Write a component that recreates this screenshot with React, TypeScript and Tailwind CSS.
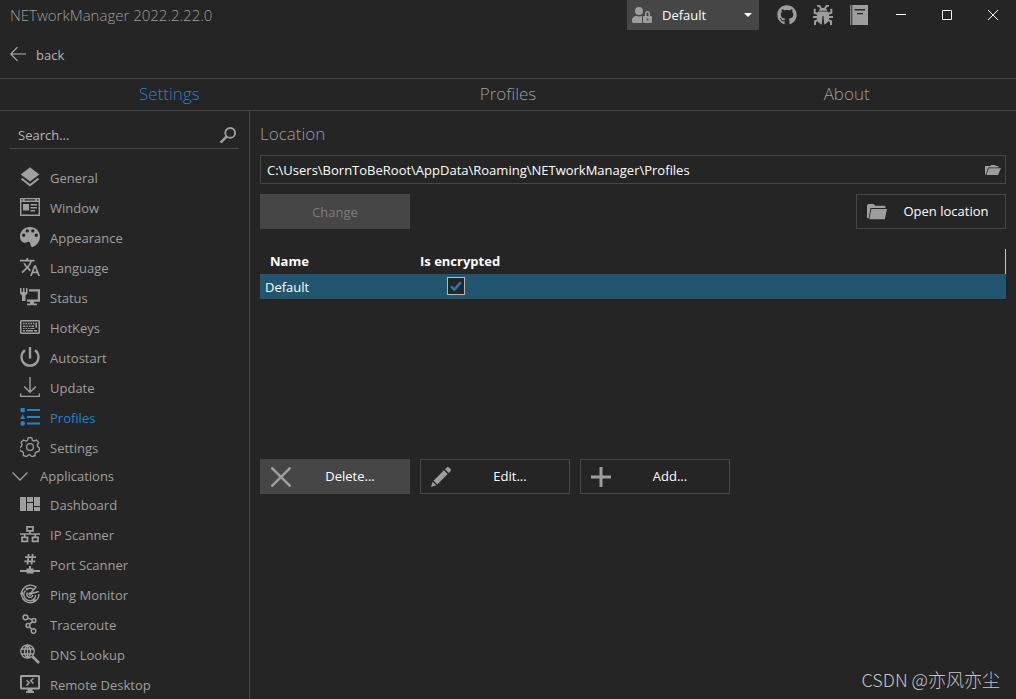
import { useState } from 'react';
import type { ReactNode } from 'react';
import { FaGithub, FaUserLock } from 'react-icons/fa';
import { MdTranslate } from 'react-icons/md';

type NavItem = {
  label: string;
  icon: ReactNode;
};

function Icon({ children, className = 'size-5' }: { children: ReactNode; className?: string }) {
  return (
    <svg viewBox="0 0 20 20" fill="currentColor" className={`${className} shrink-0`} aria-hidden="true">
      {children}
    </svg>
  );
}

const SETTINGS: NavItem[] = [
  {
    label: 'General',
    icon: (
      <Icon>
        <path d="M10 0.3 19.3 7.4 10 14.6 0.7 7.4z" />
        <path d="M0.7 12.2 2.4 10.9 10 16.9 17.6 10.9 19.3 12.2 10 19.6z" />
      </Icon>
    ),
  },
  {
    label: 'Window',
    icon: (
      <Icon>
        <path fillRule="evenodd" d="M0 1h20v18H0zM1.4 5v12.6h17.2V5zM1.5 2.2v1.3H3V2.2zm3 0v1.3h11V2.2zm12.5 0v1.3h1.5V2.2z" />
        <path d="M3 7h6v6.500H3zM10.500 7H17v1.500h-6.500zM10.500 10H17v1.500h-6.500zM10.500 13H15v1.500h-4.500z" />
      </Icon>
    ),
  },
  {
    label: 'Appearance',
    icon: (
      <Icon>
        <path
          fillRule="evenodd"
          d="M10 0C4.200 0 0 4.200 0 9.400c0 4 2.500 6.500 5.200 6.300 1.700-.1 2.600-1.200 4-.7 1.600.6 1 2.600 1.700 4.200.3.700.9.900 1.800.7C17 18.800 20 14.500 20 9.600 20 4.200 15.600 0 10 0zM7.300 2.200a1.700 1.700 0 1 1 0 3.400 1.700 1.700 0 0 1 0-3.400zm5.500 0a1.700 1.700 0 1 1 0 3.400 1.700 1.700 0 0 1 0-3.400zM3.700 6.600a1.700 1.700 0 1 1 0 3.400 1.700 1.700 0 0 1 0-3.400zm12.600 0a1.700 1.700 0 1 1 0 3.400 1.700 1.700 0 0 1 0-3.400z"
        />
      </Icon>
    ),
  },
  {
    label: 'Language',
    icon: <MdTranslate className="size-5 shrink-0" viewBox="1 2 22 20" />,
  },
  {
    label: 'Status',
    icon: (
      <Icon>
        <path d="M0 1h1.500v4H3V1h1.500v4H6V1h1.500v5.500L5.500 8.500V14H2V8.500L0 6.500z" />
        <path d="M9 2.200h11v12.500h-6V16.500h3V18.200H7v-1.700h3v-1.800H7v-2.200h10.800V4.400H9z" />
      </Icon>
    ),
  },
  {
    label: 'HotKeys',
    icon: (
      <Icon>
        <path fillRule="evenodd" d="M1 3h18l1 1v12l-1 1H1l-1-1V4zM1.500 4.500v11h17v-11z" />
        <path d="M3 5.700h1.500v1.500H3zm2.500 0H7v1.500H5.500zm2.500 0h1.500v1.500H8zm2.500 0H12v1.500h-1.500zm2.500 0h1.500v1.500H13zm2.500 0H17v5h-1.500zM3 8.500h2.500V10H3zm3.500 0H8V10H6.500zm2.500 0h1.500V10H9zm2.500 0H14V10h-2.500zM3 11h1.500v1H3zm2.500 0H7v1H5.500zM8 11h1.500v1H8zm2.500 0h4v1h-4zM3 13h2v1.500H3zm3 0h7v1.500H6zm8 0h3v1.500h-3z" />
      </Icon>
    ),
  },
  {
    label: 'Autostart',
    icon: (
      <Icon>
        <path d="M5 3.300A8.500 8.500 0 1 0 15 3.300" fill="none" stroke="currentColor" strokeWidth="2.300" />
        <path d="M8.800 0h2.400v11.500H8.800z" />
      </Icon>
    ),
  },
  {
    label: 'Update',
    icon: (
      <Icon>
        <path d="M10 0v15M4.200 9.500 10 15.300l5.800-5.800M.6 16.500v2.900h18.800v-2.900" fill="none" stroke="currentColor" strokeWidth="1.400" />
      </Icon>
    ),
  },
  {
    label: 'Profiles',
    icon: (
      <Icon>
        <path d="M.6 1h4.200v4.200H.6zM2.700 7.200 5.200 12H.2zM7 2h13v2H7zM7 9h13v2H7zM7 15.500h13v2H7z" />
        <circle cx="2.700" cy="16.400" r="2.300" />
      </Icon>
    ),
  },
  {
    label: 'Settings',
    icon: (
      <Icon>
        <path
          d="M8.200.7h3.600l.5 2.500 1.700.9 2.400-1.100 2.300 2.700-1.300 2.200.4 1.900 1.900 1.500-.9 3.200-2.500.4-1.300 1.300.1 2.500-3.300 1-1.800-1.800h-1.800l-1.700 1.800-3.200-1.300.2-2.500-1.200-1.400-2.300-.6-.5-3.200 2-1.400.5-1.800L1.100 5.400 3.500 3l2.400 1.100 1.700-.9z"
          fill="none"
          stroke="currentColor"
          strokeWidth="1.300"
          strokeLinejoin="round"
        />
        <circle cx="10" cy="10" r="3.400" fill="none" stroke="currentColor" strokeWidth="1.300" />
      </Icon>
    ),
  },
];

const APPLICATIONS: NavItem[] = [
  {
    label: 'Dashboard',
    icon: (
      <Icon>
        <path d="M0 3h6v14H0zM7 3h6v5H7zM7 9h6v8H7zM14 3h6v9h-6zM14 13h6v4h-6z" />
      </Icon>
    ),
  },
  {
    label: 'IP Scanner',
    icon: (
      <Icon>
        <path
          d="M7 2.800h6v4H7zM2 13.300h5.500v4H2zM12.500 13.300H18v4h-5.500zM10 7v3M0 10h20M4.700 10v3M15.300 10v3"
          fill="none"
          stroke="currentColor"
          strokeWidth="1.700"
        />
      </Icon>
    ),
  },
  {
    label: 'Port Scanner',
    icon: (
      <Icon>
        <path d="M8.700 0 7.500 10.500M12.700 0 11.500 10.500M5 3.200h11M4.300 7.300h11" fill="none" stroke="currentColor" strokeWidth="1.800" />
        <path d="M9 12h2v2.500h2.500V16H20v2h-6.500v1.500h-7V18H0v-2h6.500v-1.500H9z" />
      </Icon>
    ),
  },
  {
    label: 'Ping Monitor',
    icon: (
      <Icon>
        <path
          d="M3.500 4.500A8.700 8.700 0 1 0 19 10M3.500 4.500A9 9 0 0 1 15.700 2.800M5.500 6.500A6 6 0 1 0 15.800 11M7 5A6 6 0 0 1 13.300 5.300M7.500 8.500A3 3 0 1 0 12.800 11M10 10 16.500 2.500M10 10 18.800 7.500"
          fill="none"
          stroke="currentColor"
          strokeWidth="1.400"
        />
        <circle cx="1.800" cy="9.500" r="1.600" />
        <circle cx="10" cy="10" r="1.700" />
        <circle cx="14.500" cy="16.500" r="1.600" />
        <circle cx="7" cy="5" r="1.300" />
      </Icon>
    ),
  },
  {
    label: 'Traceroute',
    icon: (
      <Icon>
        <g fill="none" stroke="currentColor" strokeWidth="1.500">
          <circle cx="5.500" cy="3.300" r="2.400" />
          <circle cx="14" cy="6.500" r="1.900" />
          <circle cx="8" cy="11.500" r="1.900" />
          <circle cx="13.500" cy="17" r="2.300" />
          <path d="m7.800 4.100 4.300 1.600M12.500 7.700l-3 2.500M9.300 12.900l2.500 2.400" />
        </g>
      </Icon>
    ),
  },
  {
    label: 'DNS Lookup',
    icon: (
      <Icon>
        <path
          d="M7.500.8a6.700 6.700 0 1 0 0 13.400 6.700 6.700 0 0 0 0-13.400zm0 0c-4 3.500-4 9.900 0 13.400 4-3.500 4-9.900 0-13.400zv13.400M1.500 5h12M1.500 10h12"
          fill="none"
          stroke="currentColor"
          strokeWidth="1.300"
        />
        <path d="m12.500 12.500 6.500 6.500" stroke="currentColor" strokeWidth="2.600" />
      </Icon>
    ),
  },
  {
    label: 'Remote Desktop',
    icon: (
      <Icon>
        <path fillRule="evenodd" d="M1 1h18l1 1v12.500l-1 1h-6.500V17.300H14V19H6v-1.700h1.500v-1.800H1l-1-1V2zm.9 1.900v10.700h16.200V2.900z" />
        <path d="m6.500 6.300 2.700 2.500-2.700 2.800M13.500 4.200l-2.700 2.600 2.700 2.800" fill="none" stroke="currentColor" strokeWidth="1.500" />
      </Icon>
    ),
  },
];

const TABS = ['Settings', 'Profiles', 'About'];

const FolderIcon = ({ className }: { className?: string }) => (
  <Icon className={className}>
    <path d="M0 3.200 1.200 2h5.500l1.500 1.700h9.300l1 1V6H3.500L1.700 16.200l-.9.300L0 15.700z" />
    <path d="M4.300 7H20L17.800 17.200H2.300z" />
  </Icon>
);

function NavLink({ item, active, onSelect }: { item: NavItem; active: boolean; onSelect: () => void }) {
  return (
    <li>
      <button
        onClick={onSelect}
        className={`flex h-[30px] w-full items-start gap-2.5 pl-5 text-left leading-[30px] ${active ? 'text-[#2283ca]' : 'text-[#9f9f9f]'}`}
      >
        <span className="pt-1">{item.icon}</span>
        {item.label}
      </button>
    </li>
  );
}

function ActionButton({ icon, label, filled = false }: { icon: ReactNode; label: string; filled?: boolean }) {
  return (
    <button
      className={`flex h-[35px] w-[150px] items-center border border-[#464646] pl-2.5 text-white ${filled ? 'bg-[#464646]' : ''}`}
    >
      <span className="text-[#9d9d9d]">{icon}</span>
      <span className="flex-1 text-center">{label}</span>
    </button>
  );
}

function TitleBar() {
  return (
    <header className="flex h-[30px] items-center text-[#9d9d9d]">
      <h1 className="flex-1 pl-2.5 text-[15px] font-light">NETworkManager 2022.2.22.0</h1>
      <div className="relative mr-[18px] h-full w-[132px] bg-[#464646]">
        <FaUserLock className="pointer-events-none absolute top-[5px] left-[5px] size-5" />
        <select aria-label="Profile" className="h-full w-full appearance-none bg-transparent pt-0.5 pl-[35px] text-white">
          <option>Default</option>
        </select>
        <svg viewBox="0 0 8 4" className="pointer-events-none absolute top-[13px] right-[7px] h-1 w-2 fill-white">
          <path d="M0 0h8L4 4z" />
        </svg>
      </div>
      <div className="flex items-center gap-4 pr-[9px]">
        <a href="#github" aria-label="GitHub">
          <FaGithub className="size-5" />
        </a>
        <a href="#issues" aria-label="Report a bug">
          <Icon>
            <path d="M7 3.600 5.800 1.700H4V0h3l1.900 3h2.200L13 0h3v1.700h-1.800L13 3.600l1.300 2.200H5.700z" />
            <path d="M5.200 6.500h9.600c1 1.700 1.500 3.700 1.400 6.200-.2 3.200-1.900 5.700-5 6.900l-.7-8.600h-1l-.7 8.600c-3.100-1.200-4.800-3.700-5-6.900-.1-2.500.4-4.500 1.400-6.200z" />
            <path
              d="M5 9 1.700 7.700V3.800M4.400 12H0M5 15l-3 1.300V20M15 9l3.300-1.300V3.800M15.600 12H20M15 15l3 1.300V20"
              fill="none"
              stroke="currentColor"
              strokeWidth="2"
            />
          </Icon>
        </a>
        <a href="#docs" aria-label="Documentation">
          <Icon>
            <path d="M1 0h1.500v20H1z" opacity="0.7" />
            <path fillRule="evenodd" d="M3.300 0H19v20H3.300zM5.500 4v1.500h10.500V4zM8 8v1.200h6V8z" />
          </Icon>
        </a>
      </div>
      <div className="flex h-full text-white">
        <button aria-label="Minimize" className="grid w-[46px] place-items-center">
          <svg viewBox="0 0 10 10" className="size-2.5" fill="none" stroke="currentColor">
            <path d="M0 4.500h10" />
          </svg>
        </button>
        <button aria-label="Maximize" className="grid w-[46px] place-items-center">
          <svg viewBox="0 0 10 10" className="size-2.5" fill="none" stroke="currentColor">
            <path d="M.5.5h9v9h-9z" />
          </svg>
        </button>
        <button aria-label="Close" className="grid w-[46px] place-items-center">
          <svg viewBox="0 0 10 10" className="size-2.5" fill="none" stroke="currentColor">
            <path d="m0 0 10 10M10 0 0 10" />
          </svg>
        </button>
      </div>
    </header>
  );
}

function Sidebar({ view, onView }: { view: string; onView: (v: string) => void }) {
  const [appsOpen, setAppsOpen] = useState(true);

  return (
    <aside className="w-[250px] shrink-0 overflow-hidden border-r border-[#464646]">
      <label className="mx-2.5 mt-3 mb-3.5 flex h-[26px] items-center border-b border-[#464646] pl-2 text-[#9d9d9d]">
        <input
          type="text"
          aria-label="Search"
          placeholder="Search..."
          className="min-w-0 flex-1 bg-transparent outline-none placeholder:text-[#b4b4b4]"
        />
        <svg viewBox="0 0 18 18" className="mr-0.5 size-[18px]" fill="none" stroke="currentColor">
          <circle cx="11.200" cy="5.900" r="4.900" strokeWidth="1.900" />
          <path d="m7.500 9.700-5.900 5.900" strokeWidth="2.600" />
        </svg>
      </label>
      <ul>
        {SETTINGS.map((item) => (
          <NavLink key={item.label} item={item} active={item.label === view} onSelect={() => onView(item.label)} />
        ))}
      </ul>
      <button
        onClick={() => setAppsOpen((v) => !v)}
        className="flex h-[27px] w-full items-center gap-3 pl-3 text-[#9f9f9f]"
      >
        <svg viewBox="0 0 16 10" className="h-2.5 w-4" fill="none" stroke="currentColor" strokeWidth="1.300">
          <path d="m.5.500 7.500 7.500L15.500.5" />
        </svg>
        Applications
      </button>
      {appsOpen && (
        <ul>
          {APPLICATIONS.map((item) => (
            <NavLink key={item.label} item={item} active={item.label === view} onSelect={() => onView(item.label)} />
          ))}
        </ul>
      )}
    </aside>
  );
}

function ProfilesView() {
  const [encrypted, setEncrypted] = useState(true);

  return (
    <main className="flex min-w-0 flex-1 flex-col px-2.5 pt-3">
      <h2 className="mb-2.5 text-[17px] leading-[22px] font-light text-[#9d9d9d]">Location</h2>
      <div className="flex h-[29px] items-center border border-[#464646] pr-1 pl-1.5">
        <input
          type="text"
          aria-label="Location"
          defaultValue="C:\Users\BornToBeRoot\AppData\Roaming\NETworkManager\Profiles"
          className="min-w-0 flex-1 bg-transparent pt-0.5 text-white outline-none"
        />
        <button aria-label="Browse" className="text-[#9d9d9d]">
          <svg viewBox="0 0 16 10" className="h-2.5 w-4" fill="currentColor">
            <path d="M0 1h5L6.500 0h3.500l1 1h2.500v1.500H3.200L.8 9.500H0z" />
            <path d="M3.800 3.200H16L13 10H1.300z" />
          </svg>
        </button>
      </div>
      <div className="mt-2.5 flex justify-between">
        <button disabled className="h-[35px] w-[150px] bg-[#464646] pt-0.5 text-[#7c7c7c]">
          Change
        </button>
        <ActionButton icon={<FolderIcon className="size-5" />} label="Open location" />
      </div>
      <div className="mt-5 h-[210px]">
        <table className="w-full table-fixed text-left text-white">
          <thead>
            <tr className="h-[25px]">
              <th className="w-[150px] pl-2.5 font-bold">Name</th>
              <th className="w-[92px] pl-2.5 font-bold whitespace-nowrap">Is encrypted</th>
              <th className="border-r border-[#c4c4c4]" />
            </tr>
          </thead>
          <tbody>
            <tr className="h-[25px] bg-[#225670]">
              <td className="pt-0.5 pl-[5px]">Default</td>
              <td className="pb-0.5">
                <label className="relative mx-auto block size-[18px]">
                  <input
                    type="checkbox"
                    aria-label="Is encrypted"
                    checked={encrypted}
                    onChange={(e) => setEncrypted(e.target.checked)}
                    className="block size-[18px] appearance-none border border-[#b9b9b9] bg-[#252525]"
                  />
                  {encrypted && (
                    <svg viewBox="0 0 18 18" className="pointer-events-none absolute inset-0" fill="none">
                      <path d="m4 9.300 3.300 3.400L14 5.200" stroke="#2077b8" strokeWidth="2.500" />
                    </svg>
                  )}
                </label>
              </td>
              <td />
            </tr>
          </tbody>
        </table>
      </div>
      <div className="flex gap-2.5">
        <ActionButton
          filled
          label="Delete..."
          icon={
            <Icon>
              <path d="m1.300 1.300 17.400 17.400M18.700 1.300 1.300 18.700" stroke="currentColor" strokeWidth="2.600" strokeLinecap="round" />
            </Icon>
          }
        />
        <ActionButton
          label="Edit..."
          icon={
            <Icon>
              <path d="M14 2.200 15.500.7c.8-.8 1.900-.8 2.700 0l1.100 1.100c.8.8.8 1.900 0 2.700L17.800 6zM12.900 3.300l3.800 3.800L6.300 17.500 2.500 13.700zM1.700 14.800l3.500 3.500L0 20z" />
            </Icon>
          }
        />
        <ActionButton
          label="Add..."
          icon={
            <Icon>
              <path d="M8.500 0h3v8.500H20v3h-8.500V20h-3v-8.500H0v-3h8.500z" />
            </Icon>
          }
        />
      </div>
    </main>
  );
}

export default function App() {
  const [tab, setTab] = useState('Settings');
  const [view, setView] = useState('Profiles');

  return (
    <div className="relative flex h-screen flex-col overflow-hidden bg-[#252525] font-['Open_Sans',sans-serif] text-[13px]">
      <TitleBar />
      <button className="flex h-12 items-center gap-2.5 self-start pl-2.5 text-[#b4b4b4]">
        <svg viewBox="0 0 16 16" className="size-4" fill="none" stroke="currentColor" strokeWidth="1.100">
          <path d="M16 8H1M7.500 1.200.8 8l6.700 6.800" />
        </svg>
        <span className="pt-1">back</span>
      </button>
      <nav className="grid h-[33px] shrink-0 grid-cols-3 border-y border-[#464646]">
        {TABS.map((t) => (
          <button
            key={t}
            onClick={() => setTab(t)}
            className={`pb-0.5 text-[17px] leading-6 font-light ${t === tab ? 'text-[#2283ca]' : 'text-[#9d9d9d]'}`}
          >
            {t}
          </button>
        ))}
      </nav>
      <div className="flex min-h-0 flex-1">
        <Sidebar view={view} onView={setView} />
        <ProfilesView />
      </div>
      <p className="pointer-events-none absolute right-4 bottom-1.5 font-['Noto_Sans_CJK_SC',sans-serif] text-lg font-light text-[#c4c4c4]">
        CSDN @亦风亦尘
      </p>
    </div>
  );
}
